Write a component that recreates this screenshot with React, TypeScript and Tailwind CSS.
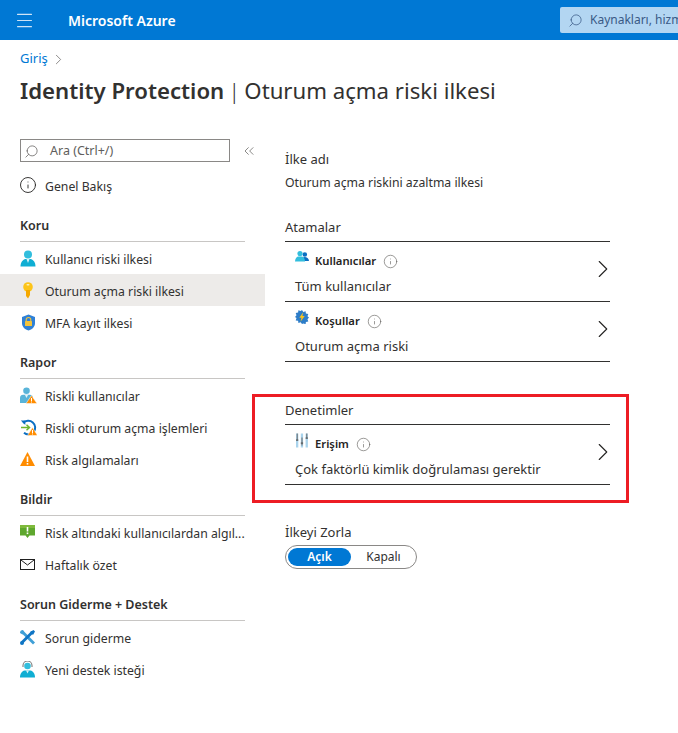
import { ChevronRight, ChevronsLeft, Info, Menu, Search } from "lucide-react";
import type { ReactNode } from "react";

function UserIcon() {
  return (
    <svg width="16" height="17" viewBox="0 0 16 17">
      <circle cx="8" cy="4.5" r="4" fill="#32bedd" />
      <path d="M0.5 16.5c0-4.5 2.5-7 5-7.500h5c2.500.5 5 3 5 7.500z" fill="#0faed3" />
      <path d="M6.500 9h3L8 13z" fill="#d8f2f8" />
    </svg>
  );
}

function KeyIcon() {
  return (
    <svg width="12" height="17" viewBox="0 0 12 17" className="ml-[2px]">
      <circle cx="6" cy="5" r="4.800" fill="#fcc419" />
      <path d="M4 8h4v5l-2 3.500L4 14z" fill="#f5a800" />
      <rect x="4.500" y="2" width="3" height="1.500" rx="0.700" fill="#fff0b3" />
    </svg>
  );
}

function ShieldIcon() {
  return (
    <svg width="15" height="17" viewBox="0 0 15 17" className="ml-[1px]">
      <path d="M7.500 0.500 14 3v6c0 4-3 6.500-6.500 7.500C4 15.500 1 13 1 9V3z" fill="#2f80d6" />
      <path d="M5.200 7V5.800a2.300 2.300 0 0 1 4.600 0V7" fill="none" stroke="#f3c33c" strokeWidth="1.100" />
      <rect x="4" y="7" width="7" height="5" rx="0.500" fill="#f3c33c" />
    </svg>
  );
}

function RiskyUsersIcon() {
  return (
    <svg width="17" height="17" viewBox="0 0 17 17">
      <circle cx="6.500" cy="3.800" r="3.300" fill="#59b4d9" />
      <path d="M0 16v-5c0-2 1.500-3.200 3-3.200h7c1.500 0 3 1.200 3 3.200v5z" fill="#59b4d9" />
      <path d="M5 8h3L6.500 11z" fill="#e4f3f9" />
      <path d="M11.500 8.500 17 16.500H6z" fill="#ff8c00" stroke="#fff" strokeWidth="0.500" />
      <rect x="11" y="11" width="1" height="3" fill="#fff" />
      <rect x="11" y="14.500" width="1" height="1" fill="#fff" />
    </svg>
  );
}

function RiskySignInsIcon() {
  return (
    <svg width="17" height="17" viewBox="0 0 17 17">
      <path d="M3.200 4.200A6.800 6.800 0 1 1 4 13.800" fill="none" stroke="#0b6fc2" strokeWidth="2" />
      <path d="M0.800 1.500h4.500V6z" fill="#0b6fc2" />
      <path d="M1 8.500h8M6.500 5.800l3 2.700-3 2.700" fill="none" stroke="#6cb52d" strokeWidth="1.500" />
      <path d="M12.500 8.500 17.500 16.500H7.500z" fill="#ff8c00" stroke="#fff" strokeWidth="0.500" />
      <rect x="12" y="11" width="1" height="3" fill="#fff" />
      <rect x="12" y="14.500" width="1" height="1" fill="#fff" />
    </svg>
  );
}

function WarningIcon() {
  return (
    <svg width="15" height="15" viewBox="0 0 15 15">
      <path d="M7.500 0 15 14H0z" fill="#ff8c00" />
      <rect x="6.700" y="4.500" width="1.600" height="5.500" fill="#fff" />
      <rect x="6.700" y="11" width="1.600" height="1.600" fill="#fff" />
    </svg>
  );
}

function AlertMailIcon() {
  return (
    <svg width="15" height="15" viewBox="0 0 15 15">
      <path d="M0 0h15v10.500H9.500L7.500 13l-2-2.500H0z" fill="#5ea72e" />
      <path d="M0 0h15v3H0z" fill="#7fba3c" />
      <rect x="6.700" y="2" width="1.600" height="4.500" fill="#fff" />
      <rect x="6.700" y="7.500" width="1.600" height="1.600" fill="#fff" />
    </svg>
  );
}

function MailIcon() {
  return (
    <svg width="15" height="11" viewBox="0 0 15 11">
      <rect x="0.500" y="0.500" width="14" height="10" fill="#fff" stroke="#1f1f1f" />
      <path d="M1 1l6.500 5L14 1" fill="none" stroke="#1f1f1f" />
    </svg>
  );
}

function ToolsIcon() {
  return (
    <svg width="15" height="15" viewBox="0 0 15 15">
      <path d="M2 1.500l12 12" stroke="#3f9fd6" strokeWidth="2.800" />
      <path d="M12.500 2 2 12.500" stroke="#0f75c4" strokeWidth="2.800" />
      <path d="M10 2 13.500 0l1.500 1.500-2 3.500z" fill="#0f75c4" />
      <circle cx="2" cy="13" r="2" fill="#0f75c4" />
      <path d="M0 3c0-2 1-3 3-3l1.500 2.500L2.500 4.500z" fill="#3f9fd6" />
    </svg>
  );
}

function SupportIcon() {
  return (
    <svg width="15" height="17" viewBox="0 0 15 17">
      <circle cx="7.500" cy="5" r="3.300" fill="#32bedd" />
      <path d="M3 6V4.500a4.500 4.500 0 0 1 9 0V6" fill="none" stroke="#7a7a7a" strokeWidth="1.100" />
      <path d="M0 16.500c0-4 2-6.500 4.500-7h6c2.500.5 4.500 3 4.500 7z" fill="#0faed3" />
      <path d="M6 9.500h3L7.500 12.500z" fill="#d8f2f8" />
    </svg>
  );
}

function GroupIcon() {
  return (
    <svg width="14" height="12" viewBox="0 0 14 12">
      <circle cx="9.800" cy="3.500" r="2.300" fill="#0b6fc2" />
      <path d="M7 10c0-2.500 1-4 2.800-4s4.200 1.500 4.200 4z" fill="#0b6fc2" />
      <circle cx="5" cy="2.600" r="2.600" fill="#32bedd" />
      <path d="M0 10.500c0-3 1.800-4.800 3-5h4c1.500.2 3 2 3 5z" fill="#32bedd" />
    </svg>
  );
}

function ConditionsIcon() {
  return (
    <svg width="14" height="14" viewBox="0 0 14 14">
      <path
        d="M7 0l1.300 2 2.300-.8.300 2.400 2.400.3-.8 2.300 1.500 1.300-1.500 1.800.8 2.300-2.400.3-.3 2.300-2.300-.8L7 14l-1.300-1.800-2.300.8-.3-2.300-2.400-.3.800-2.300L0 7l1.500-1.800-.8-2.300 2.400-.3.300-2.400 2.300.8z"
        fill="#2d7dc8"
      />
      <path d="M8.200 2.200 4.300 7.700h2.200L5.500 11.800l4.200-5.800H7.400z" fill="#fcc419" />
    </svg>
  );
}

function AccessIcon() {
  return (
    <svg width="12" height="15" viewBox="0 0 12 14">
      <rect x="0" y="0" width="2.300" height="14" fill="#a9d3ec" />
      <rect x="4.800" y="0" width="2.300" height="14" fill="#a9d3ec" />
      <rect x="9.600" y="0" width="2.300" height="14" fill="#a9d3ec" />
      <rect x="0.700" y="0" width="1" height="7" fill="#6b6b6b" />
      <rect x="5.500" y="4" width="1" height="8" fill="#6b6b6b" />
      <rect x="10.300" y="0" width="1" height="5" fill="#6b6b6b" />
      <rect x="0" y="6" width="2.300" height="1.200" fill="#555" />
      <rect x="4.800" y="9" width="2.300" height="1.200" fill="#555" />
      <rect x="9.600" y="4" width="2.300" height="1.200" fill="#555" />
    </svg>
  );
}

function NavRow({ icon, label, active }: { icon: ReactNode; label: string; active?: boolean }) {
  return (
    <div className={`flex h-8 items-center pl-5 pr-5 text-[12.25px] text-[#323130] ${active ? "bg-[#edebe9]" : ""}`}>
      <span className="flex w-[25px] shrink-0 items-center">{icon}</span>
      <span className="whitespace-nowrap pt-[4px]">{label}</span>
    </div>
  );
}

function NavGroup({ title, children }: { title: string; children: ReactNode }) {
  return (
    <div className="mt-[17px]">
      <div className="mx-5 flex h-[24px] items-center border-b border-[#c8c6c4] pb-[6px] text-[12.5px] font-semibold text-[#323130]">
        {title}
      </div>
      <div>{children}</div>
    </div>
  );
}

function PolicyRow({ icon, label, value }: { icon: ReactNode; label: string; value: string }) {
  return (
    <div className="relative flex h-[60px] items-center border-b border-[#323130] pl-[10px]">
      <div className="flex-1 pt-[4px]">
        <div className="flex h-[22px] items-center text-[11.25px] font-semibold text-[#252423]">
          <span className="mr-[6px] -mt-[8px] flex w-[14px] justify-center">{icon}</span>
          {label}
          <Info size={15} strokeWidth={1} className="ml-[7px] text-[#605e5c]" />
        </div>
        <div className="mt-[5px] text-[13px] text-[#323130]">{value}</div>
      </div>
      <ChevronRight size={30} strokeWidth={0.9} className="-mr-2 -mt-[5px] text-[#252423]" />
    </div>
  );
}

function SectionTitle({ children }: { children: ReactNode }) {
  return <div className="flex h-[24px] items-center border-b border-[#323130] pb-[4px] text-[13px] text-[#323130]">{children}</div>;
}

export default function App() {
  return (
    <div className="relative h-[733px] w-[678px] overflow-hidden bg-white font-['Noto_Sans','Open_Sans',sans-serif]">
      <header className="flex h-10 items-center bg-[#0078d4] text-white">
        <Menu size={21} strokeWidth={1.2} className="ml-[14px] text-[#cfe4f6]" />
        <span className="ml-[33px] text-[14px] font-semibold">Microsoft Azure</span>
        <div className="ml-auto flex h-[26px] w-[118px] items-center overflow-hidden rounded-l-[2px] bg-[#b3d6f2] pl-2 text-[12px] text-[#3a5a86]">
          <Search size={15} strokeWidth={1.2} className="shrink-0 -scale-x-100" />
          <span className="ml-[7px] whitespace-nowrap">Kaynakları, hizm</span>
        </div>
      </header>

      <div className="px-5 pt-[10px]">
        <div className="flex h-[18px] items-center text-[13px] text-[#0078d4]">
          Giriş
          <ChevronRight size={17} strokeWidth={1} className="ml-[2px] text-[#605e5c]" />
        </div>
        <h1 className="mt-[6px] flex h-[34px] items-center whitespace-nowrap text-[22.2px] text-[#323130]">
          <span className="font-semibold">Identity Protection</span>
          <span className="mx-[4px] font-light">|</span>
          <span>Oturum açma riski ilkesi</span>
        </h1>
      </div>

      <div className="mt-[31px] flex">
        <aside className="w-[265px] shrink-0">
          <div className="flex items-center pl-5">
            <div className="flex h-[23px] w-[210px] items-center border border-[#8a8886] pl-[3px] pt-[1px] text-[12.5px] text-[#605e5c]">
              <Search size={15} strokeWidth={1.2} className="-scale-x-100" />
              <span className="ml-[11px]">Ara (Ctrl+/)</span>
            </div>
            <ChevronsLeft size={16} strokeWidth={1.1} className="ml-[11px] text-[#605e5c]" />
          </div>
          <div className="mt-[7px]">
            <NavRow icon={<Info size={18} strokeWidth={1.2} className="-ml-[1px] text-[#252423]" />} label="Genel Bakış" />
          </div>
          <NavGroup title="Koru">
            <NavRow icon={<UserIcon />} label="Kullanıcı riski ilkesi" />
            <NavRow icon={<KeyIcon />} label="Oturum açma riski ilkesi" active />
            <NavRow icon={<ShieldIcon />} label="MFA kayıt ilkesi" />
          </NavGroup>
          <NavGroup title="Rapor">
            <NavRow icon={<RiskyUsersIcon />} label="Riskli kullanıcılar" />
            <NavRow icon={<RiskySignInsIcon />} label="Riskli oturum açma işlemleri" />
            <NavRow icon={<WarningIcon />} label="Risk algılamaları" />
          </NavGroup>
          <NavGroup title="Bildir">
            <NavRow icon={<AlertMailIcon />} label="Risk altındaki kullanıcılardan algıl..." />
            <NavRow icon={<MailIcon />} label="Haftalık özet" />
          </NavGroup>
          <NavGroup title="Sorun Giderme + Destek">
            <NavRow icon={<ToolsIcon />} label="Sorun giderme" />
            <NavRow icon={<SupportIcon />} label="Yeni destek isteği" />
          </NavGroup>
        </aside>

        <main className="ml-5 w-[325px] pt-[11px]">
          <div className="text-[13px] leading-[18px] text-[#323130]">İlke adı</div>
          <div className="mt-[6px] text-[12.25px] leading-[18px] text-[#323130]">Oturum açma riskini azaltma ilkesi</div>

          <div className="mt-[26px]">
            <SectionTitle>Atamalar</SectionTitle>
            <PolicyRow icon={<GroupIcon />} label="Kullanıcılar" value="Tüm kullanıcılar" />
            <PolicyRow icon={<ConditionsIcon />} label="Koşullar" value="Oturum açma riski" />
          </div>

          <div className="mt-[39px]">
            <SectionTitle>Denetimler</SectionTitle>
            <PolicyRow icon={<AccessIcon />} label="Erişim" value="Çok faktörlü kimlik doğrulaması gerektir" />
          </div>

          <div className="mt-[38px] text-[13px] leading-[18px] text-[#323130]">İlkeyi Zorla</div>
          <div className="mt-[4px] flex h-[24px] w-[132px] items-center rounded-full border border-[#8a8886] p-[2px] text-[12px]">
            <div className="flex h-[18px] w-[64px] items-center justify-center rounded-full bg-[#0078d4] font-semibold text-white">Açık</div>
            <div className="ml-[2px] flex w-[62px] justify-center text-[#323130]">Kapalı</div>
          </div>
        </main>
      </div>

      {/* kırmızı vurgu çerçevesi */}
      <div className="absolute left-[252px] top-[394px] h-[109px] w-[377px] border-[3px] border-[#ed1c24]" />
    </div>
  );
}
